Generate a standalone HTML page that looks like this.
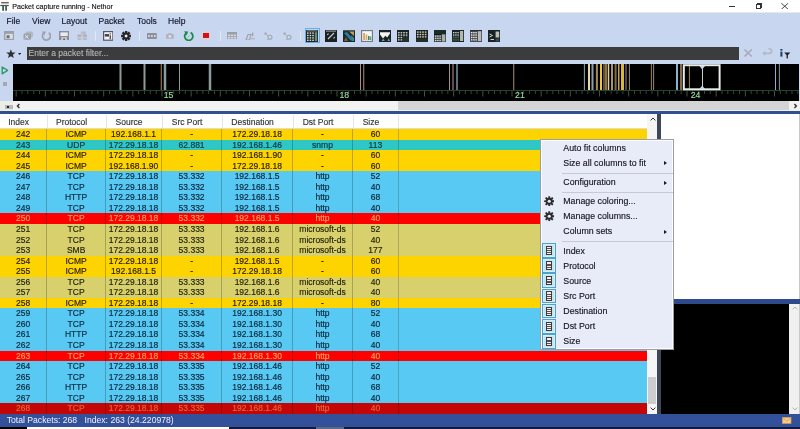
<!DOCTYPE html>
<html><head><meta charset="utf-8">
<style>
*{margin:0;padding:0;box-sizing:border-box}
html,body{width:800px;height:429px;overflow:hidden;background:#c9d6ef;font-family:"Liberation Sans",sans-serif;position:relative}
#root{position:absolute;left:0;top:0;width:800px;height:429px;will-change:transform}
.a{position:absolute}
#title{left:0;top:0;width:800px;height:13px;background:#fff;border-bottom:1px solid #e4e8f0}
#title .t{left:12.3px;top:2.7px;font-size:7.1px;color:#161616;white-space:nowrap;line-height:9px;-webkit-text-stroke:0.15px currentColor}
#menubar{left:0;top:13px;width:800px;height:50px;background:#c9d6ef}
.mi{position:absolute;top:16.5px;font-size:8.5px;color:#10142a;line-height:9px;white-space:nowrap;-webkit-text-stroke:0.15px currentColor}
#filter{left:27px;top:46.7px;width:712px;height:13.8px;background:#3c3c3c}
#filter span{position:absolute;left:1.5px;top:2.2px;font-size:8.5px;color:#b8b8b8;-webkit-text-stroke:0.12px currentColor;line-height:9px;white-space:nowrap}
#leftstrip{left:0;top:62px;width:13px;height:39px;background:#c9d6ef}
#hscroll{left:13px;top:100.8px;width:787px;height:10px;background:#f2f2f0}
#hthumb{left:397.5px;top:101.2px;width:391.5px;height:9px;background:#d4d4d4}
#corner{left:0;top:100.8px;width:13px;height:10px;background:#ecece8}
#band{left:0;top:110.8px;width:800px;height:4.1px;background:#32508f}
#list{left:0;top:114.4px;width:647px;height:300px;background:#fff;overflow:hidden}
#hdr{left:0;top:114.9px;width:647px;height:13.9px;background:#fff;border-bottom:1px solid #e2dccc}
.h{position:absolute;top:3.5px;font-size:8.5px;line-height:9px;color:#30343c;-webkit-text-stroke:0.15px currentColor;text-align:center;white-space:nowrap}
.hs{position:absolute;top:0;width:1px;height:13.6px;background:#e4e4e4}
.row{position:absolute;left:0;width:647px;height:11.5px}
.row span{position:absolute;top:0;height:11.5px;line-height:10.55px;font-size:8.5px;-webkit-text-stroke:0.15px currentColor;text-align:center;white-space:nowrap;color:#161616;border-right:1px solid rgba(0,0,0,.22)}
.row span:nth-child(7){border-right:1px solid rgba(0,0,0,.18)}
.y{background:#fdd300}
.y span{color:#241a00}
.tl{background:#2fc6c6}
.tl span{color:#06303c}
.b{background:#58c9f2}
.b span{color:#0a2438}
.r{background:#fd0000}
.r span{color:#ffa860}
.k{background:#d8d06c}
.k span{color:#1e1e0a}
.d{background:#c40606}
.d span{color:#e06a3a}
#vscroll{left:647px;top:114.4px;width:10px;height:300px;background:#f5f5f5}
#vthumb{left:648px;top:376.5px;width:8px;height:27px;background:#cdcdcd}
#split{left:657px;top:114.4px;width:4px;height:300px;background:#3e4658}
#wpanel{left:661px;top:114.4px;width:139px;height:185px;background:#fff;border-right:1.3px solid #c8c8c8}
#hsplit{left:661px;top:299px;width:139px;height:4.6px;background:#2e4a8c}
#bpanel{left:661px;top:303.6px;width:128.5px;height:110.5px;background:#000}
#bscroll{left:788.8px;top:303.6px;width:11.2px;height:110.9px;background:#f0f0f0;border-right:1.3px solid #c8c8c8}
#status{left:0;top:414px;width:800px;height:13px;background:#33509a}
#status span{position:absolute;top:2.4px;font-size:8.65px;line-height:9px;color:#f2f4ff;white-space:nowrap}
#bottom{left:0;top:427px;width:800px;height:2px;background:#101a40}
#menu{left:540px;top:139.2px;width:134px;height:211.2px;background:#e8ecf8;border:1px solid #9c9ea4;box-shadow:inset 0 0 0 1px #fbfcff}
.mt{position:absolute;left:22.3px;font-size:8.8px;line-height:9px;color:#151520;white-space:nowrap;-webkit-text-stroke:0.15px currentColor}
.sep{position:absolute;left:21px;width:111px;height:1px;background:#c6cad6}
.arr{position:absolute;left:122.5px;width:0;height:0;border-left:3px solid #1a1a1a;border-top:2.8px solid transparent;border-bottom:2.8px solid transparent}
.cb{position:absolute;left:1px;width:14px;height:14.6px;background:#c4e4f2;border:1px solid #48a4cc;box-shadow:inset 0 0 0 1px #d8eef8}
.cb i{position:absolute;left:3.2px;top:1.7px;width:5.6px;height:9.2px;border:1px solid #3e3a3a;background:#f6eeee}
.cb b{position:absolute;left:4.2px;width:3.6px;height:0.9px;background:#5a5050}
</style></head><body><div id="root">
<div id="title" class="a">
 <svg class="a" style="left:0;top:0" width="12" height="12" viewBox="0 0 12 12"><rect x="1.1" y="2.1" width="7.7" height="1.3" fill="#7a4848"/><rect x="0.3" y="4.9" width="8.5" height="1.2" fill="#2e5e48"/><rect x="2.2" y="5" width="1.8" height="5.8" fill="#3e5e50"/><rect x="5.2" y="5" width="1.8" height="5.8" fill="#4a5e5a"/></svg>
 <div class="a t">Packet capture running - Nethor</div>
 <div class="a" style="left:728.5px;top:5.6px;width:6px;height:1px;background:#333"></div>
 <div class="a" style="left:755.5px;top:4.2px;width:5px;height:4.6px;border:1px solid #333"></div>
 <div class="a" style="left:756.8px;top:3px;width:5px;height:4.6px;border-top:1px solid #333;border-right:1px solid #333"></div>
 <svg class="a" style="left:781px;top:2.8px" width="7.5" height="6.5" viewBox="0 0 7.5 6.5"><path d="M0.3 0.2 L7.2 6.3 M7.2 0.2 L0.3 6.3" stroke="#333" stroke-width="0.9"/></svg>
</div>
<div id="menubar" class="a">
 <span class="mi" style="left:6.5px;top:4px">File</span>
 <span class="mi" style="left:32px;top:4px">View</span>
 <span class="mi" style="left:61.5px;top:4px">Layout</span>
 <span class="mi" style="left:98.5px;top:4px">Packet</span>
 <span class="mi" style="left:137px;top:4px">Tools</span>
 <span class="mi" style="left:168px;top:4px">Help</span>
</div>
<svg class="a" style="left:4.1px;top:31.3px" width="10.2" height="9.2" viewBox="0 0 10.2 9.2"><rect x="0.7" y="0.7" width="8.8" height="7.8" fill="#dde0e8" stroke="#9ca0aa" stroke-width="1.4"/><rect x="0.7" y="0.7" width="8.8" height="2.2" fill="#9ca0aa"/><rect x="2.6" y="4.2" width="3" height="3" fill="#6e727c"/></svg>
<svg class="a" style="left:22.5px;top:31.3px" width="10.5" height="9.2" viewBox="0 0 10.5 9.2"><rect x="2.5" y="0.5" width="7.5" height="6" rx="1.5" fill="#b4b8c0"/><rect x="0.5" y="2.5" width="7.5" height="6.2" rx="1.5" fill="#9ca0aa"/><path d="M2 4 L5.5 7.5 M5.5 4 L2 7.5" stroke="#e8eaf0" stroke-width="1"/></svg>
<svg class="a" style="left:40.5px;top:30.8px" width="10.8" height="10.2" viewBox="0 0 10.8 10.2"><path d="M3.0 1.9 A4.0 4.0 0 1 0 7.8 1.8" fill="none" stroke="#9ca0aa" stroke-width="1.7"/><path d="M0.8 0.4 L5.0 0.6 L3.3 4.2 Z" fill="#9ca0aa"/></svg>
<svg class="a" style="left:58.75px;top:31px" width="10.2" height="9.4" viewBox="0 0 10.2 9.4"><rect x="0" y="0" width="10.2" height="9.4" fill="#8a8e96"/><rect x="1.4" y="1.4" width="7.4" height="3.6" fill="#e8eaf0"/><rect x="2.2" y="6.2" width="5.8" height="3.2" fill="#c6cad2"/><rect x="4.3" y="7.6" width="1.6" height="1.8" fill="#55585e"/></svg>
<svg class="a" style="left:76.8px;top:31.3px" width="10.4" height="9.2" viewBox="0 0 10.4 9.2"><rect x="4" y="0.5" width="5" height="3" fill="#b8bcc6"/><rect x="0.5" y="3.5" width="9.5" height="2.4" fill="#aeb2bc"/><rect x="0.5" y="6.5" width="9.5" height="2.5" fill="#b8bcc6"/><rect x="4.5" y="3.5" width="1" height="5.5" fill="#d8dce4"/></svg>
<div class="a" style="left:95.4px;top:30.5px;width:1px;height:10.5px;background:#e2e8f4"></div>
<div class="a" style="left:138.5px;top:30.5px;width:1px;height:10.5px;background:#e2e8f4"></div>
<div class="a" style="left:219.9px;top:30.5px;width:1px;height:10.5px;background:#e2e8f4"></div>
<div class="a" style="left:300.0px;top:30.5px;width:1px;height:10.5px;background:#e2e8f4"></div>
<svg class="a" style="left:102.6px;top:31px" width="10.5" height="9.8" viewBox="0 0 10.5 9.8"><rect x="0.6" y="0.6" width="9.3" height="8.6" fill="#f4f4f4" stroke="#55575e" stroke-width="1.2"/><rect x="1.8" y="3" width="4.2" height="2.6" fill="#44464c"/><rect x="6.6" y="4.2" width="1.3" height="4" fill="#44464c"/><rect x="6.6" y="2.2" width="1.3" height="1.2" fill="#44464c"/></svg>
<svg class="a" style="left:121px;top:31px" width="10.2" height="10" viewBox="0 0 10.2 10"><g transform="translate(5.1 5)" fill="#26262a"><rect x="-1.2" y="-5" width="2.4" height="3" transform="rotate(0)"/><rect x="-1.2" y="-5" width="2.4" height="3" transform="rotate(45)"/><rect x="-1.2" y="-5" width="2.4" height="3" transform="rotate(90)"/><rect x="-1.2" y="-5" width="2.4" height="3" transform="rotate(135)"/><rect x="-1.2" y="-5" width="2.4" height="3" transform="rotate(180)"/><rect x="-1.2" y="-5" width="2.4" height="3" transform="rotate(225)"/><rect x="-1.2" y="-5" width="2.4" height="3" transform="rotate(270)"/><rect x="-1.2" y="-5" width="2.4" height="3" transform="rotate(315)"/><circle r="3.4"/><circle r="1.5" fill="#f0f0f0"/></g></svg>
<svg class="a" style="left:146.9px;top:32.5px" width="9.8" height="6.2" viewBox="0 0 9.8 6.2"><rect x="0" y="0" width="9.8" height="6.2" rx="0.8" fill="#8c9098"/><rect x="1.2" y="2.2" width="1.6" height="1.6" fill="#e8eaf0"/><rect x="4.1" y="2.2" width="1.6" height="1.6" fill="#e8eaf0"/><rect x="7" y="2.2" width="1.6" height="1.6" fill="#e8eaf0"/></svg>
<svg class="a" style="left:166.3px;top:32.8px" width="7.8" height="5.8" viewBox="0 0 7.8 5.8"><rect x="0" y="1" width="7.8" height="4.8" rx="0.8" fill="#b0b4bc"/><rect x="2.4" y="0" width="3" height="1.4" fill="#b0b4bc"/><circle cx="3.9" cy="3.4" r="1.3" fill="#dfe3ea"/></svg>
<svg class="a" style="left:182.5px;top:30.6px" width="11" height="10.2" viewBox="0 0 11 10.2"><path d="M3.4 1.9 A4.1 4.1 0 1 0 7.6 1.6" fill="none" stroke="#1c8a48" stroke-width="1.8"/><path d="M1.2 0.3 L5.2 0.6 L3.6 4.4 Z" fill="#1c8a48"/><path d="M4.6 6.6 L6.4 4.4" stroke="#7ab890" stroke-width="0.8"/></svg>
<div class="a" style="left:203.1px;top:32.9px;width:6px;height:5.6px;background:#d01414;box-shadow:0 0 1px 1px rgba(255,200,200,.6)"></div>
<svg class="a" style="left:227px;top:31.5px" width="10" height="7.6" viewBox="0 0 10 7.6"><rect x="0" y="0" width="10" height="7.6" fill="#9aa0a8"/><g fill="#d8dce4"><rect x="0.8" y="2.6" width="2.4" height="1.5"/><rect x="3.8" y="2.6" width="2.4" height="1.5"/><rect x="6.8" y="2.6" width="2.4" height="1.5"/><rect x="0.8" y="5" width="2.4" height="1.5"/><rect x="3.8" y="5" width="2.4" height="1.5"/><rect x="6.8" y="5" width="2.4" height="1.5"/></g></svg>
<svg class="a" style="left:244.5px;top:31.5px" width="10.5" height="8.5" viewBox="0 0 10.5 8.5"><path d="M1 8 L3 2.5 L6 2.5 L4.5 8 Z" fill="none" stroke="#9ca0a8" stroke-width="1.1"/><rect x="7" y="0.6" width="1.3" height="3.5" fill="#9ca0a8"/><rect x="6" y="6" width="4" height="1.4" fill="#b4b8c0"/></svg>
<svg class="a" style="left:264px;top:31.5px" width="9.5" height="8.5" viewBox="0 0 9.5 8.5"><rect x="0.5" y="0.5" width="2.2" height="2.2" fill="#a4a8b0"/><path d="M2.5 2.5 L4 4" stroke="#a4a8b0" stroke-width="1"/><circle cx="6" cy="5.2" r="2" fill="none" stroke="#a4a8b0" stroke-width="1.1"/><path d="M4.5 6.5 L3 8.3" stroke="#a4a8b0" stroke-width="1"/></svg>
<svg class="a" style="left:283px;top:31.5px" width="9.5" height="8.5" viewBox="0 0 9.5 8.5"><rect x="0.5" y="0.5" width="2.2" height="2.2" fill="#a4a8b0"/><path d="M2.5 2.5 L4 4" stroke="#a4a8b0" stroke-width="1"/><circle cx="6" cy="5.2" r="2" fill="none" stroke="#a4a8b0" stroke-width="1.1"/><path d="M4.5 6.5 L3 8.3" stroke="#a4a8b0" stroke-width="1"/></svg>
<div class="a" style="left:305px;top:28.3px;width:14.6px;height:14.6px;background:#bcd8f0;border:1px solid #6aaee0"></div>
<svg class="a" style="left:306.2px;top:29.8px" width="12" height="12" viewBox="0 0 12 12"><rect x="0" y="0" width="12" height="12" fill="#1b2224"/><g fill="#d6dcd8"><rect x="1.0" y="2.4" width="1.6" height="1.4"/><rect x="3.6" y="2.4" width="1.6" height="1.4"/><rect x="6.2" y="2.4" width="1.6" height="1.4"/><rect x="1.0" y="4.8" width="1.6" height="1.4"/><rect x="3.6" y="4.8" width="1.6" height="1.4"/><rect x="6.2" y="4.8" width="1.6" height="1.4"/><rect x="1.0" y="7.199999999999999" width="1.6" height="1.4"/><rect x="3.6" y="7.199999999999999" width="1.6" height="1.4"/><rect x="6.2" y="7.199999999999999" width="1.6" height="1.4"/><rect x="1.0" y="9.6" width="1.6" height="1.4"/><rect x="3.6" y="9.6" width="1.6" height="1.4"/><rect x="6.2" y="9.6" width="1.6" height="1.4"/></g><rect x="8.8" y="2.2" width="2.4" height="9" fill="#6a8a78"/><rect x="0.6" y="0.4" width="10.8" height="1" fill="#8a9290"/></svg>
<svg class="a" style="left:324.9px;top:29.8px" width="12" height="12" viewBox="0 0 12 12"><rect x="0" y="0" width="12" height="12" fill="#1b2224"/><rect x="1" y="0.6" width="10" height="1" fill="#a0a8a8"/><path d="M3 9 L9 3 M2.2 5 L3.5 3.6 M8.5 8.4 L9.8 7" stroke="#c8d0cc" stroke-width="1.1"/></svg>
<svg class="a" style="left:342.9px;top:29.8px" width="12" height="12" viewBox="0 0 12 12"><rect x="0" y="0" width="12" height="12" fill="#1c2830"/><path d="M1 3 L4 2 L10 9 L8 11 Z" fill="#2e7a98"/><path d="M6 1.5 L11 1.5 L11 6 Z" fill="#c0a050"/><path d="M1 11 L3 7 L5 11 Z" fill="#7a6030"/><path d="M8 5 L11 8 L11 11 L9 11 Z" fill="#3a8898"/><rect x="0" y="0" width="12" height="1.2" fill="#4a5860"/></svg>
<svg class="a" style="left:360.9px;top:29.8px" width="12" height="12" viewBox="0 0 12 12"><rect x="0.6" y="0.6" width="10.8" height="10.8" fill="#f6f6f6" stroke="#70747c" stroke-width="1.1"/><rect x="2.2" y="3" width="1.7" height="7" fill="#e89a50"/><rect x="4.6" y="4.5" width="1.7" height="5.5" fill="#c8b070"/><rect x="7" y="6" width="1.6" height="4" fill="#3a8a50"/><rect x="9" y="6.5" width="1.3" height="3.5" fill="#5a9aa0"/></svg>
<svg class="a" style="left:379.2px;top:29.8px" width="12" height="12" viewBox="0 0 12 12"><rect x="0" y="0" width="12" height="12" fill="#1b2224"/><path d="M1 2.2 L11 2.2 L11 3.4 L8.2 7.6 L6.4 5.8 L4 8.6 L1 4.4 Z" fill="#f2f2f0"/><path d="M2.5 11 L4.2 8.8 L5.8 11 Z M8.5 11 L9.8 8.2 L11 11 Z" fill="#5aa8a0"/></svg>
<svg class="a" style="left:397.2px;top:29.8px" width="12" height="12" viewBox="0 0 12 12"><rect x="0" y="0" width="12" height="12" fill="#1b2224"/><g fill="#c8ccc8"><rect x="1.0" y="2.0" width="1.6" height="1.4"/><rect x="3.6" y="2.0" width="1.6" height="1.4"/><rect x="6.2" y="2.0" width="1.6" height="1.4"/><rect x="8.8" y="2.0" width="1.6" height="1.4"/><rect x="1.0" y="4.4" width="1.6" height="1.4"/><rect x="3.6" y="4.4" width="1.6" height="1.4"/><rect x="6.2" y="4.4" width="1.6" height="1.4"/><rect x="8.8" y="4.4" width="1.6" height="1.4"/><rect x="1.0" y="6.8" width="1.6" height="1.4"/><rect x="3.6" y="6.8" width="1.6" height="1.4"/><rect x="6.2" y="6.8" width="1.6" height="1.4"/><rect x="8.8" y="6.8" width="1.6" height="1.4"/><rect x="1.0" y="9.2" width="1.6" height="1.4"/><rect x="3.6" y="9.2" width="1.6" height="1.4"/><rect x="6.2" y="9.2" width="1.6" height="1.4"/><rect x="8.8" y="9.2" width="1.6" height="1.4"/></g><rect x="6" y="7" width="6" height="5" fill="#24302c"/></svg>
<svg class="a" style="left:415.6px;top:29.8px" width="12" height="12" viewBox="0 0 12 12"><rect x="0" y="0" width="12" height="12" fill="#1b2224"/><g fill="#d8d0b8"><rect x="1.0" y="1.4" width="1.6" height="1.4"/><rect x="3.6" y="1.4" width="1.6" height="1.4"/><rect x="6.2" y="1.4" width="1.6" height="1.4"/><rect x="8.8" y="1.4" width="1.6" height="1.4"/><rect x="1.0" y="3.8" width="1.6" height="1.4"/><rect x="3.6" y="3.8" width="1.6" height="1.4"/><rect x="6.2" y="3.8" width="1.6" height="1.4"/><rect x="8.8" y="3.8" width="1.6" height="1.4"/><rect x="1.0" y="6.199999999999999" width="1.6" height="1.4"/><rect x="3.6" y="6.199999999999999" width="1.6" height="1.4"/><rect x="6.2" y="6.199999999999999" width="1.6" height="1.4"/><rect x="8.8" y="6.199999999999999" width="1.6" height="1.4"/></g><rect x="0" y="9" width="12" height="3" fill="#203028"/></svg>
<svg class="a" style="left:433.6px;top:29.8px" width="12" height="12" viewBox="0 0 12 12"><rect x="0" y="0" width="12" height="12" fill="#3a4448"/><rect x="0" y="0" width="12" height="4" fill="#1a2a28"/><rect x="0" y="4" width="7" height="1" fill="#101818"/><g fill="#e4e4e0"><rect x="1.0" y="5.5" width="1.4" height="1.2"/><rect x="3.2" y="5.5" width="1.4" height="1.2"/><rect x="5.4" y="5.5" width="1.4" height="1.2"/><rect x="1.0" y="7.7" width="1.4" height="1.2"/><rect x="3.2" y="7.7" width="1.4" height="1.2"/><rect x="5.4" y="7.7" width="1.4" height="1.2"/><rect x="1.0" y="9.9" width="1.4" height="1.2"/><rect x="3.2" y="9.9" width="1.4" height="1.2"/><rect x="5.4" y="9.9" width="1.4" height="1.2"/></g><rect x="8" y="4.5" width="3.2" height="7" fill="#a8b0a8"/></svg>
<svg class="a" style="left:451.8px;top:29.8px" width="12" height="12" viewBox="0 0 12 12"><rect x="0" y="0" width="12" height="12" fill="#1b2224"/><g fill="#d0d8d0"><rect x="1.0" y="2.0" width="1.4" height="1.3"/><rect x="3.2" y="2.0" width="1.4" height="1.3"/><rect x="5.4" y="2.0" width="1.4" height="1.3"/><rect x="1.0" y="4.4" width="1.4" height="1.3"/><rect x="3.2" y="4.4" width="1.4" height="1.3"/><rect x="5.4" y="4.4" width="1.4" height="1.3"/><rect x="1.0" y="6.8" width="1.4" height="1.3"/><rect x="3.2" y="6.8" width="1.4" height="1.3"/><rect x="5.4" y="6.8" width="1.4" height="1.3"/><rect x="1.0" y="9.2" width="1.4" height="1.3"/><rect x="3.2" y="9.2" width="1.4" height="1.3"/><rect x="5.4" y="9.2" width="1.4" height="1.3"/></g><rect x="8" y="1" width="3.2" height="10" fill="#b0b8b0"/><rect x="0" y="7" width="7" height="5" fill="#1f3a2a" opacity=".7"/></svg>
<svg class="a" style="left:470.1px;top:29.8px" width="12" height="12" viewBox="0 0 12 12"><rect x="0" y="0" width="12" height="12" fill="#4a4e54"/><g fill="#f0f0f0"><rect x="1.0" y="2.0" width="1.4" height="1.3"/><rect x="3.2" y="2.0" width="1.4" height="1.3"/><rect x="5.4" y="2.0" width="1.4" height="1.3"/><rect x="1.0" y="4.4" width="1.4" height="1.3"/><rect x="3.2" y="4.4" width="1.4" height="1.3"/><rect x="5.4" y="4.4" width="1.4" height="1.3"/><rect x="1.0" y="6.8" width="1.4" height="1.3"/><rect x="3.2" y="6.8" width="1.4" height="1.3"/><rect x="5.4" y="6.8" width="1.4" height="1.3"/><rect x="1.0" y="9.2" width="1.4" height="1.3"/><rect x="3.2" y="9.2" width="1.4" height="1.3"/><rect x="5.4" y="9.2" width="1.4" height="1.3"/></g><rect x="8" y="1" width="3.2" height="10" fill="#b8bcb8"/><rect x="0" y="0" width="12" height="1.2" fill="#2a2e34"/></svg>
<svg class="a" style="left:488.1px;top:29.8px" width="12" height="12" viewBox="0 0 12 12"><rect x="0" y="0" width="12" height="12" fill="#1b2224"/><path d="M1.5 4 L4.5 5.5 L1.5 7 M2.5 9.5 L6 9.5" fill="none" stroke="#c8d8c8" stroke-width="1"/><rect x="7.6" y="1.5" width="3.6" height="6" fill="#b8c0b8"/><rect x="7.6" y="8.5" width="3.6" height="3" fill="#3a4a48"/></svg>
<div id="filter" class="a"><span>Enter a packet filter...</span></div>
<svg class="a" style="left:5.8px;top:48.6px" width="9.8" height="10" viewBox="0 0 9.8 10"><polygon points="4.90,0.20 6.13,3.40 9.56,3.59 6.90,5.75 7.78,9.06 4.90,7.20 2.02,9.06 2.90,5.75 0.24,3.59 3.67,3.40" fill="#2e3034"/></svg>
<svg class="a" style="left:17.5px;top:53.1px" width="3.2" height="2" viewBox="0 0 3.2 2"><path d="M0 0 L3.2 0 L1.6 2 Z" fill="#1a2040"/></svg>
<svg class="a" style="left:744.4px;top:49.2px" width="8.4" height="8" viewBox="0 0 8.4 8"><path d="M0.5 0.5 L7.9 7.5 M7.9 0.5 L0.5 7.5" stroke="#a8acb8" stroke-width="1.6"/></svg>
<svg class="a" style="left:762px;top:48px" width="10.6" height="8.2" viewBox="0 0 10.6 8.2"><path d="M6.5 0.8 Q9.8 0.8 9.8 3.2 Q9.8 5.4 6.8 5.4 L2.4 5.4" fill="none" stroke="#b4b8c6" stroke-width="1.6"/><path d="M0.2 5.4 L3.4 2.8 L3.4 8 Z" fill="#b4b8c6"/></svg>
<svg class="a" style="left:779.5px;top:48.8px" width="11" height="9.8" viewBox="0 0 11 9.8"><rect x="0.4" y="0" width="2" height="1.6" fill="#1a3a6a"/><rect x="0.4" y="2.6" width="2" height="5" fill="#1a3a6a"/><path d="M4.2 3.6 L10.3 3.6 L7.9 6.2 L7.9 9.4 L6.6 9.4 L6.6 6.2 Z" fill="#222"/></svg>
<div id="leftstrip" class="a"></div>
<svg class="a" style="left:1px;top:66px" width="8" height="9" viewBox="0 0 8 9"><path d="M1.2 1 L6.6 4.4 L1.2 7.8 Z" fill="none" stroke="#2a9a6a" stroke-width="1.4" stroke-linejoin="round"/></svg>
<div class="a" style="left:2.8px;top:81.5px;width:4px;height:4.5px;background:#a4a8b4"></div>
<svg width="786" height="37" viewBox="13 64 786 37" style="position:absolute;left:13px;top:64px">
<rect x="13" y="64" width="786" height="37" fill="#000"/>
<rect x="119.50" y="64" width="2" height="26.5" fill="#8c9c9a"/>
<rect x="143.50" y="64" width="2" height="26.5" fill="#8c9c9a"/>
<rect x="160.75" y="64" width="1" height="26.5" fill="#b08a50"/>
<rect x="163.75" y="64" width="2.5" height="26.5" fill="#8c9c9a"/>
<rect x="179.00" y="64" width="1" height="26.5" fill="#8c9c9a"/>
<rect x="208.75" y="64" width="2.5" height="26.5" fill="#8c9c9a"/>
<rect x="360.00" y="64" width="1" height="26.5" fill="#b08888"/>
<rect x="363.25" y="64" width="1" height="26.5" fill="#a89090"/>
<rect x="449.00" y="64" width="1" height="26.5" fill="#a09090"/>
<rect x="452.50" y="64" width="1" height="26.5" fill="#c09098"/>
<rect x="456.25" y="64" width="1.5" height="26.5" fill="#7894a4"/>
<rect x="513.25" y="64" width="1" height="26.5" fill="#b09060"/>
<rect x="583.90" y="64" width="1" height="26.5" fill="#8aa0b0"/>
<rect x="588.00" y="64" width="2" height="26.5" fill="#e8d8a8"/>
<rect x="591.50" y="64" width="2" height="26.5" fill="#8c9cac"/>
<rect x="595.90" y="64" width="2" height="26.5" fill="#a88a58"/>
<rect x="600.00" y="64" width="2" height="26.5" fill="#e8c838"/>
<rect x="603.50" y="64" width="1" height="26.5" fill="#b89860"/>
<rect x="605.00" y="64" width="2" height="26.5" fill="#8c7040"/>
<rect x="607.75" y="64" width="1.5" height="26.5" fill="#e0d0a0"/>
<rect x="611.25" y="64" width="1.5" height="26.5" fill="#d8c898"/>
<rect x="614.60" y="64" width="2" height="26.5" fill="#806848"/>
<rect x="618.00" y="64" width="1.5" height="26.5" fill="#c0a060"/>
<rect x="621.00" y="64" width="3" height="26.5" fill="#d8b838"/>
<rect x="625.50" y="64" width="1" height="26.5" fill="#b09060"/>
<rect x="628.90" y="64" width="1" height="26.5" fill="#8c9090"/>
<rect x="650.9" y="64" width="0.9" height="26.5" fill="#a89070"/>
<rect x="653.2" y="64" width="0.9" height="26.5" fill="#a89878"/>
<rect x="676.00" y="64" width="2" height="26.5" fill="#88b0d0"/>
<rect x="680.25" y="64" width="1.5" height="26.5" fill="#b09060"/>
<rect x="688.90" y="64" width="1" height="26.5" fill="#a08858"/>
<rect x="775.00" y="64" width="1" height="26.5" fill="#88b0d0"/>
<rect x="778.90" y="64" width="1" height="26.5" fill="#8c9090"/>
<rect x="13" y="90" width="786" height="1" fill="#22452c"/>
<rect x="15.67" y="91" width="1" height="5.5" fill="#3e5446"/>
<rect x="21.50" y="91" width="1" height="3" fill="#34483a"/>
<rect x="27.33" y="91" width="1" height="3" fill="#34483a"/>
<rect x="33.17" y="91" width="1" height="3" fill="#34483a"/>
<rect x="39.00" y="91" width="1" height="3" fill="#34483a"/>
<rect x="44.83" y="91" width="1" height="5.5" fill="#3e5446"/>
<rect x="50.67" y="91" width="1" height="3" fill="#34483a"/>
<rect x="56.50" y="91" width="1" height="3" fill="#34483a"/>
<rect x="62.33" y="91" width="1" height="3" fill="#34483a"/>
<rect x="68.17" y="91" width="1" height="3" fill="#34483a"/>
<rect x="74.00" y="91" width="1" height="5.5" fill="#3e5446"/>
<rect x="79.83" y="91" width="1" height="3" fill="#34483a"/>
<rect x="85.67" y="91" width="1" height="3" fill="#34483a"/>
<rect x="91.50" y="91" width="1" height="3" fill="#34483a"/>
<rect x="97.33" y="91" width="1" height="3" fill="#34483a"/>
<rect x="103.17" y="91" width="1" height="5.5" fill="#3e5446"/>
<rect x="109.00" y="91" width="1" height="3" fill="#34483a"/>
<rect x="114.83" y="91" width="1" height="3" fill="#34483a"/>
<rect x="120.67" y="91" width="1" height="3" fill="#34483a"/>
<rect x="126.50" y="91" width="1" height="3" fill="#34483a"/>
<rect x="132.33" y="91" width="1" height="5.5" fill="#3e5446"/>
<rect x="138.17" y="91" width="1" height="3" fill="#34483a"/>
<rect x="144.00" y="91" width="1" height="3" fill="#34483a"/>
<rect x="149.83" y="91" width="1" height="3" fill="#34483a"/>
<rect x="155.67" y="91" width="1" height="3" fill="#34483a"/>
<rect x="161.50" y="91" width="1" height="5.5" fill="#3e5446"/>
<rect x="167.33" y="91" width="1" height="3" fill="#34483a"/>
<rect x="173.17" y="91" width="1" height="3" fill="#34483a"/>
<rect x="179.00" y="91" width="1" height="3" fill="#34483a"/>
<rect x="184.83" y="91" width="1" height="3" fill="#34483a"/>
<rect x="190.67" y="91" width="1" height="5.5" fill="#3e5446"/>
<rect x="196.50" y="91" width="1" height="3" fill="#34483a"/>
<rect x="202.33" y="91" width="1" height="3" fill="#34483a"/>
<rect x="208.17" y="91" width="1" height="3" fill="#34483a"/>
<rect x="214.00" y="91" width="1" height="3" fill="#34483a"/>
<rect x="219.83" y="91" width="1" height="5.5" fill="#3e5446"/>
<rect x="225.67" y="91" width="1" height="3" fill="#34483a"/>
<rect x="231.50" y="91" width="1" height="3" fill="#34483a"/>
<rect x="237.33" y="91" width="1" height="3" fill="#34483a"/>
<rect x="243.17" y="91" width="1" height="3" fill="#34483a"/>
<rect x="249.00" y="91" width="1" height="5.5" fill="#3e5446"/>
<rect x="254.83" y="91" width="1" height="3" fill="#34483a"/>
<rect x="260.67" y="91" width="1" height="3" fill="#34483a"/>
<rect x="266.50" y="91" width="1" height="3" fill="#34483a"/>
<rect x="272.33" y="91" width="1" height="3" fill="#34483a"/>
<rect x="278.17" y="91" width="1" height="5.5" fill="#3e5446"/>
<rect x="284.00" y="91" width="1" height="3" fill="#34483a"/>
<rect x="289.83" y="91" width="1" height="3" fill="#34483a"/>
<rect x="295.67" y="91" width="1" height="3" fill="#34483a"/>
<rect x="301.50" y="91" width="1" height="3" fill="#34483a"/>
<rect x="307.33" y="91" width="1" height="5.5" fill="#3e5446"/>
<rect x="313.17" y="91" width="1" height="3" fill="#34483a"/>
<rect x="319.00" y="91" width="1" height="3" fill="#34483a"/>
<rect x="324.83" y="91" width="1" height="3" fill="#34483a"/>
<rect x="330.67" y="91" width="1" height="3" fill="#34483a"/>
<rect x="336.50" y="91" width="1" height="5.5" fill="#3e5446"/>
<rect x="342.33" y="91" width="1" height="3" fill="#34483a"/>
<rect x="348.17" y="91" width="1" height="3" fill="#34483a"/>
<rect x="354.00" y="91" width="1" height="3" fill="#34483a"/>
<rect x="359.83" y="91" width="1" height="3" fill="#34483a"/>
<rect x="365.67" y="91" width="1" height="5.5" fill="#3e5446"/>
<rect x="371.50" y="91" width="1" height="3" fill="#34483a"/>
<rect x="377.33" y="91" width="1" height="3" fill="#34483a"/>
<rect x="383.17" y="91" width="1" height="3" fill="#34483a"/>
<rect x="389.00" y="91" width="1" height="3" fill="#34483a"/>
<rect x="394.83" y="91" width="1" height="5.5" fill="#3e5446"/>
<rect x="400.67" y="91" width="1" height="3" fill="#34483a"/>
<rect x="406.50" y="91" width="1" height="3" fill="#34483a"/>
<rect x="412.33" y="91" width="1" height="3" fill="#34483a"/>
<rect x="418.17" y="91" width="1" height="3" fill="#34483a"/>
<rect x="424.00" y="91" width="1" height="5.5" fill="#3e5446"/>
<rect x="429.83" y="91" width="1" height="3" fill="#34483a"/>
<rect x="435.67" y="91" width="1" height="3" fill="#34483a"/>
<rect x="441.50" y="91" width="1" height="3" fill="#34483a"/>
<rect x="447.33" y="91" width="1" height="3" fill="#34483a"/>
<rect x="453.17" y="91" width="1" height="5.5" fill="#3e5446"/>
<rect x="459.00" y="91" width="1" height="3" fill="#34483a"/>
<rect x="464.83" y="91" width="1" height="3" fill="#34483a"/>
<rect x="470.66" y="91" width="1" height="3" fill="#34483a"/>
<rect x="476.50" y="91" width="1" height="3" fill="#34483a"/>
<rect x="482.33" y="91" width="1" height="5.5" fill="#3e5446"/>
<rect x="488.16" y="91" width="1" height="3" fill="#34483a"/>
<rect x="494.00" y="91" width="1" height="3" fill="#34483a"/>
<rect x="499.83" y="91" width="1" height="3" fill="#34483a"/>
<rect x="505.66" y="91" width="1" height="3" fill="#34483a"/>
<rect x="511.50" y="91" width="1" height="5.5" fill="#3e5446"/>
<rect x="517.33" y="91" width="1" height="3" fill="#34483a"/>
<rect x="523.16" y="91" width="1" height="3" fill="#34483a"/>
<rect x="529.00" y="91" width="1" height="3" fill="#34483a"/>
<rect x="534.83" y="91" width="1" height="3" fill="#34483a"/>
<rect x="540.66" y="91" width="1" height="5.5" fill="#3e5446"/>
<rect x="546.50" y="91" width="1" height="3" fill="#34483a"/>
<rect x="552.33" y="91" width="1" height="3" fill="#34483a"/>
<rect x="558.16" y="91" width="1" height="3" fill="#34483a"/>
<rect x="564.00" y="91" width="1" height="3" fill="#34483a"/>
<rect x="569.83" y="91" width="1" height="5.5" fill="#3e5446"/>
<rect x="575.66" y="91" width="1" height="3" fill="#34483a"/>
<rect x="581.50" y="91" width="1" height="3" fill="#34483a"/>
<rect x="587.33" y="91" width="1" height="3" fill="#34483a"/>
<rect x="593.16" y="91" width="1" height="3" fill="#34483a"/>
<rect x="599.00" y="91" width="1" height="5.5" fill="#3e5446"/>
<rect x="604.83" y="91" width="1" height="3" fill="#34483a"/>
<rect x="610.66" y="91" width="1" height="3" fill="#34483a"/>
<rect x="616.50" y="91" width="1" height="3" fill="#34483a"/>
<rect x="622.33" y="91" width="1" height="3" fill="#34483a"/>
<rect x="628.16" y="91" width="1" height="5.5" fill="#3e5446"/>
<rect x="634.00" y="91" width="1" height="3" fill="#34483a"/>
<rect x="639.83" y="91" width="1" height="3" fill="#34483a"/>
<rect x="645.66" y="91" width="1" height="3" fill="#34483a"/>
<rect x="651.50" y="91" width="1" height="3" fill="#34483a"/>
<rect x="657.33" y="91" width="1" height="5.5" fill="#3e5446"/>
<rect x="663.16" y="91" width="1" height="3" fill="#34483a"/>
<rect x="669.00" y="91" width="1" height="3" fill="#34483a"/>
<rect x="674.83" y="91" width="1" height="3" fill="#34483a"/>
<rect x="680.66" y="91" width="1" height="3" fill="#34483a"/>
<rect x="686.50" y="91" width="1" height="5.5" fill="#3e5446"/>
<rect x="692.33" y="91" width="1" height="3" fill="#34483a"/>
<rect x="698.16" y="91" width="1" height="3" fill="#34483a"/>
<rect x="704.00" y="91" width="1" height="3" fill="#34483a"/>
<rect x="709.83" y="91" width="1" height="3" fill="#34483a"/>
<rect x="715.66" y="91" width="1" height="5.5" fill="#3e5446"/>
<rect x="721.50" y="91" width="1" height="3" fill="#34483a"/>
<rect x="727.33" y="91" width="1" height="3" fill="#34483a"/>
<rect x="733.16" y="91" width="1" height="3" fill="#34483a"/>
<rect x="739.00" y="91" width="1" height="3" fill="#34483a"/>
<rect x="744.83" y="91" width="1" height="5.5" fill="#3e5446"/>
<rect x="750.66" y="91" width="1" height="3" fill="#34483a"/>
<rect x="756.50" y="91" width="1" height="3" fill="#34483a"/>
<rect x="762.33" y="91" width="1" height="3" fill="#34483a"/>
<rect x="768.16" y="91" width="1" height="3" fill="#34483a"/>
<rect x="774.00" y="91" width="1" height="5.5" fill="#3e5446"/>
<rect x="779.83" y="91" width="1" height="3" fill="#34483a"/>
<rect x="785.66" y="91" width="1" height="3" fill="#34483a"/>
<rect x="791.50" y="91" width="1" height="3" fill="#34483a"/>
<rect x="797.33" y="91" width="1" height="3" fill="#34483a"/>
<text x="163.75" y="98.4" font-family="Liberation Sans" font-size="8.7" fill="#9ad8a4" stroke="#9ad8a4" stroke-width="0.15">15</text>
<text x="339.4" y="98.4" font-family="Liberation Sans" font-size="8.7" fill="#9ad8a4" stroke="#9ad8a4" stroke-width="0.15">18</text>
<text x="515.05" y="98.4" font-family="Liberation Sans" font-size="8.7" fill="#9ad8a4" stroke="#9ad8a4" stroke-width="0.15">21</text>
<text x="690.7" y="98.4" font-family="Liberation Sans" font-size="8.7" fill="#9ad8a4" stroke="#9ad8a4" stroke-width="0.15">24</text>
<rect x="683.8" y="65.2" width="35.8" height="24.1" fill="none" stroke="#e8ecea" stroke-width="2"/>
<rect x="702" y="66" width="1" height="23" fill="#c8d0d0"/>
<path d="M699.5 66 L705 66 L702.2 69.5 Z" fill="#c8d8e8"/>
<path d="M699.5 89 L705 89 L702.2 85.5 Z" fill="#c8d8e8"/>
</svg>
<div id="corner" class="a"><div class="a" style="left:4.5px;top:4px;width:8px;height:4.5px;background:#b8b8b8"></div><div class="a" style="left:7px;top:5.3px;width:2px;height:2px;background:#222"></div></div>
<div id="hscroll" class="a"></div>
<div id="hthumb" class="a"></div>
<svg class="a" style="left:15.5px;top:103px" width="5" height="6" viewBox="0 0 5 6"><path d="M3.4 1 L1.4 3 L3.4 5" fill="none" stroke="#2a2a2a" stroke-width="1.3"/></svg>
<svg class="a" style="left:792.5px;top:103px" width="5" height="6" viewBox="0 0 5 6"><path d="M1.4 1 L3.4 3 L1.4 5" fill="none" stroke="#2a2a2a" stroke-width="1.3"/></svg>
<div id="band" class="a"></div>
<div id="list" class="a"></div>
<div id="hdr" class="a">
 <span class="h" style="left:0;width:37.2px">Index</span>
 <span class="h" style="left:47.2px;width:48.8px">Protocol</span>
 <span class="h" style="left:106px;width:46px">Source</span>
 <span class="h" style="left:162px;width:50.2px">Src Port</span>
 <span class="h" style="left:222.2px;width:60.8px">Destination</span>
 <span class="h" style="left:293px;width:50px">Dst Port</span>
 <span class="h" style="left:353px;width:35.8px">Size</span>
 <i class="hs" style="left:47px"></i><i class="hs" style="left:105.8px"></i><i class="hs" style="left:161.8px"></i><i class="hs" style="left:222px"></i><i class="hs" style="left:292.8px"></i><i class="hs" style="left:352.8px"></i><i class="hs" style="left:398.2px"></i>
</div>
<div class="row y" style="top:129.000px"><span style="left:0px;width:47.2px">242</span><span style="left:47.2px;width:58.8px">ICMP</span><span style="left:106px;width:56px">192.168.1.1</span><span style="left:162px;width:60.19999999999999px">-</span><span style="left:222.2px;width:70.80000000000001px">172.29.18.18</span><span style="left:293px;width:60px">-</span><span style="left:353px;width:45.80000000000001px">60</span></div>
<div class="row tl" style="top:139.550px"><span style="left:0px;width:47.2px">243</span><span style="left:47.2px;width:58.8px">UDP</span><span style="left:106px;width:56px">172.29.18.18</span><span style="left:162px;width:60.19999999999999px">62.881</span><span style="left:222.2px;width:70.80000000000001px">192.168.1.46</span><span style="left:293px;width:60px">snmp</span><span style="left:353px;width:45.80000000000001px">113</span></div>
<div class="row y" style="top:150.100px"><span style="left:0px;width:47.2px">244</span><span style="left:47.2px;width:58.8px">ICMP</span><span style="left:106px;width:56px">172.29.18.18</span><span style="left:162px;width:60.19999999999999px">-</span><span style="left:222.2px;width:70.80000000000001px">192.168.1.90</span><span style="left:293px;width:60px">-</span><span style="left:353px;width:45.80000000000001px">60</span></div>
<div class="row y" style="top:160.650px"><span style="left:0px;width:47.2px">245</span><span style="left:47.2px;width:58.8px">ICMP</span><span style="left:106px;width:56px">192.168.1.90</span><span style="left:162px;width:60.19999999999999px">-</span><span style="left:222.2px;width:70.80000000000001px">172.29.18.18</span><span style="left:293px;width:60px">-</span><span style="left:353px;width:45.80000000000001px">60</span></div>
<div class="row b" style="top:171.200px"><span style="left:0px;width:47.2px">246</span><span style="left:47.2px;width:58.8px">TCP</span><span style="left:106px;width:56px">172.29.18.18</span><span style="left:162px;width:60.19999999999999px">53.332</span><span style="left:222.2px;width:70.80000000000001px">192.168.1.5</span><span style="left:293px;width:60px">http</span><span style="left:353px;width:45.80000000000001px">52</span></div>
<div class="row b" style="top:181.750px"><span style="left:0px;width:47.2px">247</span><span style="left:47.2px;width:58.8px">TCP</span><span style="left:106px;width:56px">172.29.18.18</span><span style="left:162px;width:60.19999999999999px">53.332</span><span style="left:222.2px;width:70.80000000000001px">192.168.1.5</span><span style="left:293px;width:60px">http</span><span style="left:353px;width:45.80000000000001px">40</span></div>
<div class="row b" style="top:192.300px"><span style="left:0px;width:47.2px">248</span><span style="left:47.2px;width:58.8px">HTTP</span><span style="left:106px;width:56px">172.29.18.18</span><span style="left:162px;width:60.19999999999999px">53.332</span><span style="left:222.2px;width:70.80000000000001px">192.168.1.5</span><span style="left:293px;width:60px">http</span><span style="left:353px;width:45.80000000000001px">68</span></div>
<div class="row b" style="top:202.850px"><span style="left:0px;width:47.2px">249</span><span style="left:47.2px;width:58.8px">TCP</span><span style="left:106px;width:56px">172.29.18.18</span><span style="left:162px;width:60.19999999999999px">53.332</span><span style="left:222.2px;width:70.80000000000001px">192.168.1.5</span><span style="left:293px;width:60px">http</span><span style="left:353px;width:45.80000000000001px">40</span></div>
<div class="row r" style="top:213.400px"><span style="left:0px;width:47.2px">250</span><span style="left:47.2px;width:58.8px">TCP</span><span style="left:106px;width:56px">172.29.18.18</span><span style="left:162px;width:60.19999999999999px">53.332</span><span style="left:222.2px;width:70.80000000000001px">192.168.1.5</span><span style="left:293px;width:60px">http</span><span style="left:353px;width:45.80000000000001px">40</span></div>
<div class="row k" style="top:223.950px"><span style="left:0px;width:47.2px">251</span><span style="left:47.2px;width:58.8px">TCP</span><span style="left:106px;width:56px">172.29.18.18</span><span style="left:162px;width:60.19999999999999px">53.333</span><span style="left:222.2px;width:70.80000000000001px">192.168.1.6</span><span style="left:293px;width:60px">microsoft-ds</span><span style="left:353px;width:45.80000000000001px">52</span></div>
<div class="row k" style="top:234.500px"><span style="left:0px;width:47.2px">252</span><span style="left:47.2px;width:58.8px">TCP</span><span style="left:106px;width:56px">172.29.18.18</span><span style="left:162px;width:60.19999999999999px">53.333</span><span style="left:222.2px;width:70.80000000000001px">192.168.1.6</span><span style="left:293px;width:60px">microsoft-ds</span><span style="left:353px;width:45.80000000000001px">40</span></div>
<div class="row k" style="top:245.050px"><span style="left:0px;width:47.2px">253</span><span style="left:47.2px;width:58.8px">SMB</span><span style="left:106px;width:56px">172.29.18.18</span><span style="left:162px;width:60.19999999999999px">53.333</span><span style="left:222.2px;width:70.80000000000001px">192.168.1.6</span><span style="left:293px;width:60px">microsoft-ds</span><span style="left:353px;width:45.80000000000001px">177</span></div>
<div class="row y" style="top:255.600px"><span style="left:0px;width:47.2px">254</span><span style="left:47.2px;width:58.8px">ICMP</span><span style="left:106px;width:56px">172.29.18.18</span><span style="left:162px;width:60.19999999999999px">-</span><span style="left:222.2px;width:70.80000000000001px">192.168.1.5</span><span style="left:293px;width:60px">-</span><span style="left:353px;width:45.80000000000001px">60</span></div>
<div class="row y" style="top:266.150px"><span style="left:0px;width:47.2px">255</span><span style="left:47.2px;width:58.8px">ICMP</span><span style="left:106px;width:56px">192.168.1.5</span><span style="left:162px;width:60.19999999999999px">-</span><span style="left:222.2px;width:70.80000000000001px">172.29.18.18</span><span style="left:293px;width:60px">-</span><span style="left:353px;width:45.80000000000001px">60</span></div>
<div class="row k" style="top:276.700px"><span style="left:0px;width:47.2px">256</span><span style="left:47.2px;width:58.8px">TCP</span><span style="left:106px;width:56px">172.29.18.18</span><span style="left:162px;width:60.19999999999999px">53.333</span><span style="left:222.2px;width:70.80000000000001px">192.168.1.6</span><span style="left:293px;width:60px">microsoft-ds</span><span style="left:353px;width:45.80000000000001px">40</span></div>
<div class="row k" style="top:287.250px"><span style="left:0px;width:47.2px">257</span><span style="left:47.2px;width:58.8px">TCP</span><span style="left:106px;width:56px">172.29.18.18</span><span style="left:162px;width:60.19999999999999px">53.333</span><span style="left:222.2px;width:70.80000000000001px">192.168.1.6</span><span style="left:293px;width:60px">microsoft-ds</span><span style="left:353px;width:45.80000000000001px">40</span></div>
<div class="row y" style="top:297.800px"><span style="left:0px;width:47.2px">258</span><span style="left:47.2px;width:58.8px">ICMP</span><span style="left:106px;width:56px">172.29.18.18</span><span style="left:162px;width:60.19999999999999px">-</span><span style="left:222.2px;width:70.80000000000001px">172.29.18.18</span><span style="left:293px;width:60px">-</span><span style="left:353px;width:45.80000000000001px">80</span></div>
<div class="row b" style="top:308.350px"><span style="left:0px;width:47.2px">259</span><span style="left:47.2px;width:58.8px">TCP</span><span style="left:106px;width:56px">172.29.18.18</span><span style="left:162px;width:60.19999999999999px">53.334</span><span style="left:222.2px;width:70.80000000000001px">192.168.1.30</span><span style="left:293px;width:60px">http</span><span style="left:353px;width:45.80000000000001px">52</span></div>
<div class="row b" style="top:318.900px"><span style="left:0px;width:47.2px">260</span><span style="left:47.2px;width:58.8px">TCP</span><span style="left:106px;width:56px">172.29.18.18</span><span style="left:162px;width:60.19999999999999px">53.334</span><span style="left:222.2px;width:70.80000000000001px">192.168.1.30</span><span style="left:293px;width:60px">http</span><span style="left:353px;width:45.80000000000001px">40</span></div>
<div class="row b" style="top:329.450px"><span style="left:0px;width:47.2px">261</span><span style="left:47.2px;width:58.8px">HTTP</span><span style="left:106px;width:56px">172.29.18.18</span><span style="left:162px;width:60.19999999999999px">53.334</span><span style="left:222.2px;width:70.80000000000001px">192.168.1.30</span><span style="left:293px;width:60px">http</span><span style="left:353px;width:45.80000000000001px">68</span></div>
<div class="row b" style="top:340.000px"><span style="left:0px;width:47.2px">262</span><span style="left:47.2px;width:58.8px">TCP</span><span style="left:106px;width:56px">172.29.18.18</span><span style="left:162px;width:60.19999999999999px">53.334</span><span style="left:222.2px;width:70.80000000000001px">192.168.1.30</span><span style="left:293px;width:60px">http</span><span style="left:353px;width:45.80000000000001px">40</span></div>
<div class="row r" style="top:350.550px"><span style="left:0px;width:47.2px">263</span><span style="left:47.2px;width:58.8px">TCP</span><span style="left:106px;width:56px">172.29.18.18</span><span style="left:162px;width:60.19999999999999px">53.334</span><span style="left:222.2px;width:70.80000000000001px">192.168.1.30</span><span style="left:293px;width:60px">http</span><span style="left:353px;width:45.80000000000001px">40</span></div>
<div class="row b" style="top:361.100px"><span style="left:0px;width:47.2px">264</span><span style="left:47.2px;width:58.8px">TCP</span><span style="left:106px;width:56px">172.29.18.18</span><span style="left:162px;width:60.19999999999999px">53.335</span><span style="left:222.2px;width:70.80000000000001px">192.168.1.46</span><span style="left:293px;width:60px">http</span><span style="left:353px;width:45.80000000000001px">52</span></div>
<div class="row b" style="top:371.650px"><span style="left:0px;width:47.2px">265</span><span style="left:47.2px;width:58.8px">TCP</span><span style="left:106px;width:56px">172.29.18.18</span><span style="left:162px;width:60.19999999999999px">53.335</span><span style="left:222.2px;width:70.80000000000001px">192.168.1.46</span><span style="left:293px;width:60px">http</span><span style="left:353px;width:45.80000000000001px">40</span></div>
<div class="row b" style="top:382.200px"><span style="left:0px;width:47.2px">266</span><span style="left:47.2px;width:58.8px">HTTP</span><span style="left:106px;width:56px">172.29.18.18</span><span style="left:162px;width:60.19999999999999px">53.335</span><span style="left:222.2px;width:70.80000000000001px">192.168.1.46</span><span style="left:293px;width:60px">http</span><span style="left:353px;width:45.80000000000001px">68</span></div>
<div class="row b" style="top:392.750px"><span style="left:0px;width:47.2px">267</span><span style="left:47.2px;width:58.8px">TCP</span><span style="left:106px;width:56px">172.29.18.18</span><span style="left:162px;width:60.19999999999999px">53.335</span><span style="left:222.2px;width:70.80000000000001px">192.168.1.46</span><span style="left:293px;width:60px">http</span><span style="left:353px;width:45.80000000000001px">40</span></div>
<div class="row d" style="top:403.300px"><span style="left:0px;width:47.2px">268</span><span style="left:47.2px;width:58.8px">TCP</span><span style="left:106px;width:56px">172.29.18.18</span><span style="left:162px;width:60.19999999999999px">53.335</span><span style="left:222.2px;width:70.80000000000001px">192.168.1.46</span><span style="left:293px;width:60px">http</span><span style="left:353px;width:45.80000000000001px">40</span></div>
<div id="vscroll" class="a"></div>
<div id="vthumb" class="a"></div>
<svg class="a" style="left:649.5px;top:117px" width="6" height="4" viewBox="0 0 6 4"><path d="M0.6 3.4 L3 1 L5.4 3.4" fill="none" stroke="#333" stroke-width="1"/></svg>
<svg class="a" style="left:649.5px;top:407px" width="6" height="4" viewBox="0 0 6 4"><path d="M0.6 0.6 L3 3 L5.4 0.6" fill="none" stroke="#333" stroke-width="1"/></svg>
<div id="split" class="a"></div>
<div id="wpanel" class="a"></div>
<div id="hsplit" class="a"></div>
<div id="bpanel" class="a"></div>
<div id="bscroll" class="a"></div>
<svg class="a" style="left:792px;top:306px" width="6" height="4" viewBox="0 0 6 4"><path d="M0.6 3.4 L3 1 L5.4 3.4" fill="none" stroke="#aaa" stroke-width="0.9"/></svg>
<svg class="a" style="left:792px;top:407px" width="6" height="4" viewBox="0 0 6 4"><path d="M0.6 0.6 L3 3 L5.4 0.6" fill="none" stroke="#aaa" stroke-width="0.9"/></svg>
<div id="status" class="a">
 <span style="left:6.7px">Total Packets: 268</span>
 <span style="left:84.5px">Index: 263 (24.220978)</span>
 <svg class="a" style="left:782.2px;top:3.4px" width="9.4" height="6.8" viewBox="0 0 9.4 6.8"><rect x="0.4" y="0.4" width="8.6" height="6" fill="#f2cc90" stroke="#d49a58" stroke-width="0.8"/><path d="M0.6 0.8 L4.7 4 L8.8 0.8" fill="none" stroke="#d49a58" stroke-width="0.7"/></svg>
</div>
<div id="bottom" class="a"><div class="a" style="left:0;top:0;width:27px;height:2px;background:#000"></div><div class="a" style="left:27px;top:0;width:201.5px;height:2px;background:#fff"></div><div class="a" style="left:316px;top:0;width:28px;height:2px;background:#5a6a80"></div></div>
<div id="menu" class="a">
<span class="mt" style="top:3.96px">Auto fit columns</span>
<span class="mt" style="top:19.06px">Size all columns to fit</span>
<i class="arr" style="top:21.30px"></i>
<span class="mt" style="top:38.26px">Configuration</span>
<i class="arr" style="top:40.50px"></i>
<span class="mt" style="top:56.86px">Manage coloring...</span>
<svg class="a" style="left:2.75px;top:55.55px" width="10.5" height="10.5" viewBox="-5.25 -5.25 10.5 10.5"><g fill="#2c2c30"><path d="M-0.85 -5.1 L0.85 -5.1 L1.2 -2.2 L-1.2 -2.2 Z" transform="rotate(0)"/><path d="M-0.85 -5.1 L0.85 -5.1 L1.2 -2.2 L-1.2 -2.2 Z" transform="rotate(45)"/><path d="M-0.85 -5.1 L0.85 -5.1 L1.2 -2.2 L-1.2 -2.2 Z" transform="rotate(90)"/><path d="M-0.85 -5.1 L0.85 -5.1 L1.2 -2.2 L-1.2 -2.2 Z" transform="rotate(135)"/><path d="M-0.85 -5.1 L0.85 -5.1 L1.2 -2.2 L-1.2 -2.2 Z" transform="rotate(180)"/><path d="M-0.85 -5.1 L0.85 -5.1 L1.2 -2.2 L-1.2 -2.2 Z" transform="rotate(225)"/><path d="M-0.85 -5.1 L0.85 -5.1 L1.2 -2.2 L-1.2 -2.2 Z" transform="rotate(270)"/><path d="M-0.85 -5.1 L0.85 -5.1 L1.2 -2.2 L-1.2 -2.2 Z" transform="rotate(315)"/><circle r="3.2"/></g><circle r="1.6" fill="#e7ebf8"/></svg>
<span class="mt" style="top:71.76px">Manage columns...</span>
<svg class="a" style="left:2.75px;top:70.45px" width="10.5" height="10.5" viewBox="-5.25 -5.25 10.5 10.5"><g fill="#2c2c30"><path d="M-0.85 -5.1 L0.85 -5.1 L1.2 -2.2 L-1.2 -2.2 Z" transform="rotate(0)"/><path d="M-0.85 -5.1 L0.85 -5.1 L1.2 -2.2 L-1.2 -2.2 Z" transform="rotate(45)"/><path d="M-0.85 -5.1 L0.85 -5.1 L1.2 -2.2 L-1.2 -2.2 Z" transform="rotate(90)"/><path d="M-0.85 -5.1 L0.85 -5.1 L1.2 -2.2 L-1.2 -2.2 Z" transform="rotate(135)"/><path d="M-0.85 -5.1 L0.85 -5.1 L1.2 -2.2 L-1.2 -2.2 Z" transform="rotate(180)"/><path d="M-0.85 -5.1 L0.85 -5.1 L1.2 -2.2 L-1.2 -2.2 Z" transform="rotate(225)"/><path d="M-0.85 -5.1 L0.85 -5.1 L1.2 -2.2 L-1.2 -2.2 Z" transform="rotate(270)"/><path d="M-0.85 -5.1 L0.85 -5.1 L1.2 -2.2 L-1.2 -2.2 Z" transform="rotate(315)"/><circle r="3.2"/></g><circle r="1.6" fill="#e7ebf8"/></svg>
<span class="mt" style="top:86.76px">Column sets</span>
<i class="arr" style="top:89.80px"></i>
<span class="mt" style="top:106.66px">Index</span>
<div class="cb" style="top:102.90px"><i></i><b style="top:4.4px"></b><b style="top:6.2px"></b><b style="top:8.0px"></b></div>
<span class="mt" style="top:121.66px">Protocol</span>
<div class="cb" style="top:118.10px"><i></i><b style="top:4.4px"></b><b style="top:6.2px"></b><b style="top:8.0px"></b></div>
<span class="mt" style="top:136.66px">Source</span>
<div class="cb" style="top:133.30px"><i></i><b style="top:4.4px"></b><b style="top:6.2px"></b><b style="top:8.0px"></b></div>
<span class="mt" style="top:151.66px">Src Port</span>
<div class="cb" style="top:148.50px"><i></i><b style="top:4.4px"></b><b style="top:6.2px"></b><b style="top:8.0px"></b></div>
<span class="mt" style="top:166.66px">Destination</span>
<div class="cb" style="top:163.70px"><i></i><b style="top:4.4px"></b><b style="top:6.2px"></b><b style="top:8.0px"></b></div>
<span class="mt" style="top:181.66px">Dst Port</span>
<div class="cb" style="top:178.90px"><i></i><b style="top:4.4px"></b><b style="top:6.2px"></b><b style="top:8.0px"></b></div>
<span class="mt" style="top:196.66px">Size</span>
<div class="cb" style="top:194.10px"><i></i><b style="top:4.4px"></b><b style="top:6.2px"></b><b style="top:8.0px"></b></div>
<div class="sep" style="top:33.20px"></div>
<div class="sep" style="top:51.80px"></div>
<div class="sep" style="top:101.10px"></div>
</div>
</div></body></html>
